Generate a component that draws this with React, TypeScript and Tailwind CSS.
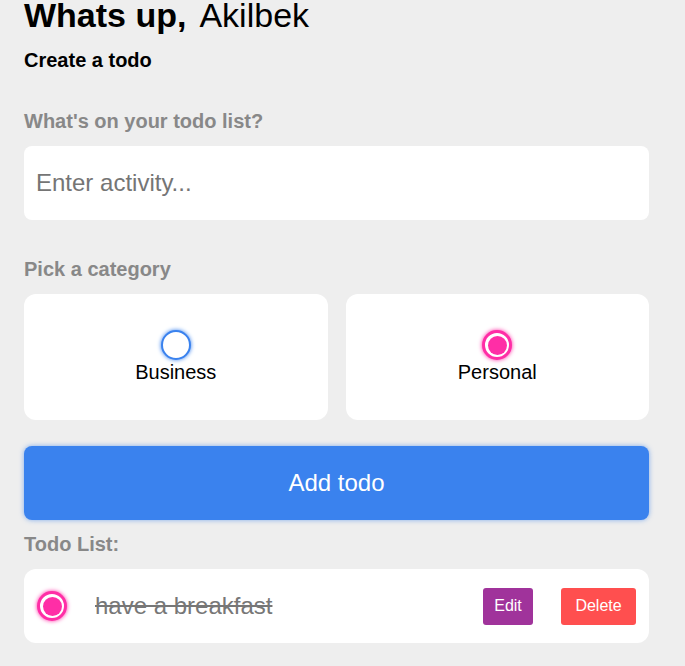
import React, { useState } from "react";

type Todo = {
    content: string;
    category: "business" | "personal";
    done: boolean;
};

const RadioDot: React.FC<{ checked: boolean; color: "blue" | "pink" }> = ({ checked, color }) =>
    color === "blue" ? (
        <span className="flex w-[30px] h-[30px] items-center justify-center rounded-full border-2 border-[#3a82ee] bg-white shadow-[0_0_4px_#3a82ee]">
            {checked && <span className="w-[18px] h-[18px] rounded-full bg-[#3a82ee]" />}
        </span>
    ) : (
        <span className="flex w-[30px] h-[30px] items-center justify-center rounded-full border-[3px] border-[#ff2ea6] bg-white shadow-[0_0_4px_#ff2ea6]">
            {checked && <span className="w-[19px] h-[19px] rounded-full bg-[#ff2ea6]" />}
        </span>
    );

export default function App() {
    const [category, setCategory] = useState<"business" | "personal">("personal");
    const [todos] = useState<Todo[]>([
        { content: "have a breakfast", category: "personal", done: true },
    ]);

    return (
        <div className="min-h-[666px] bg-[#eeeeee] px-6 font-['Liberation_Sans',Arial,sans-serif] text-black">
            <h1 className="text-[34px] leading-[31px]">
                <span className="font-bold">Whats up,</span>
                <span className="ml-[13px] font-normal">Akilbek</span>
            </h1>

            <section className="mt-[17px] w-[625px]">
                <h3 className="text-[20px] leading-[24px] font-bold">Create a todo</h3>

                <h4 className="mt-[37px] text-[20px] leading-[24px] font-bold text-[#888888]">
                    What's on your todo list?
                </h4>
                <input
                    type="text"
                    placeholder="Enter activity..."
                    className="mt-[13px] block w-full h-[74px] rounded-lg bg-white px-3 text-[24px] outline-none placeholder:text-[#757575]"
                />

                <h4 className="mt-[37px] text-[20px] leading-[24px] font-bold text-[#888888]">
                    Pick a category
                </h4>
                <div className="mt-[13px] grid grid-cols-2 gap-[18px]">
                    <button
                        onClick={() => setCategory("business")}
                        className="flex h-[126px] flex-col items-center justify-center rounded-xl bg-white"
                    >
                        <RadioDot checked={category === "business"} color="blue" />
                        <span className="text-[20px] leading-[24px]">Business</span>
                    </button>
                    <button
                        onClick={() => setCategory("personal")}
                        className="flex h-[126px] flex-col items-center justify-center rounded-xl bg-white"
                    >
                        <RadioDot checked={category === "personal"} color="pink" />
                        <span className="text-[20px] leading-[24px]">Personal</span>
                    </button>
                </div>

                <button className="mt-[26px] block w-full h-[74px] rounded-lg bg-[#3a82ee] text-[24px] text-white shadow-[0_0_5px_rgba(58,130,238,0.6)]">
                    Add todo
                </button>
            </section>

            <section className="mt-[12px] w-[625px]">
                <h4 className="text-[20px] leading-[24px] font-bold text-[#888888]">Todo List:</h4>
                <ul className="mt-[13px] flex flex-col gap-4">
                    {todos.map((todo, idx) => (
                        <li key={idx} className="flex h-[74px] items-center rounded-xl bg-white pl-[13px] pr-[13px]">
                            <RadioDot checked={todo.done} color={todo.category === "business" ? "blue" : "pink"} />
                            <span className="ml-[28px] flex-1 text-[24px] text-[#777777] line-through">
                                {todo.content}
                            </span>
                            <button className="w-[50px] h-[37px] rounded-[3px] bg-[#a0339b] text-[16px] text-white">
                                Edit
                            </button>
                            <button className="ml-[28px] w-[75px] h-[37px] rounded-[3px] bg-[#ff4f4f] text-[16px] text-white">
                                Delete
                            </button>
                        </li>
                    ))}
                </ul>
            </section>
        </div>
    );
}
